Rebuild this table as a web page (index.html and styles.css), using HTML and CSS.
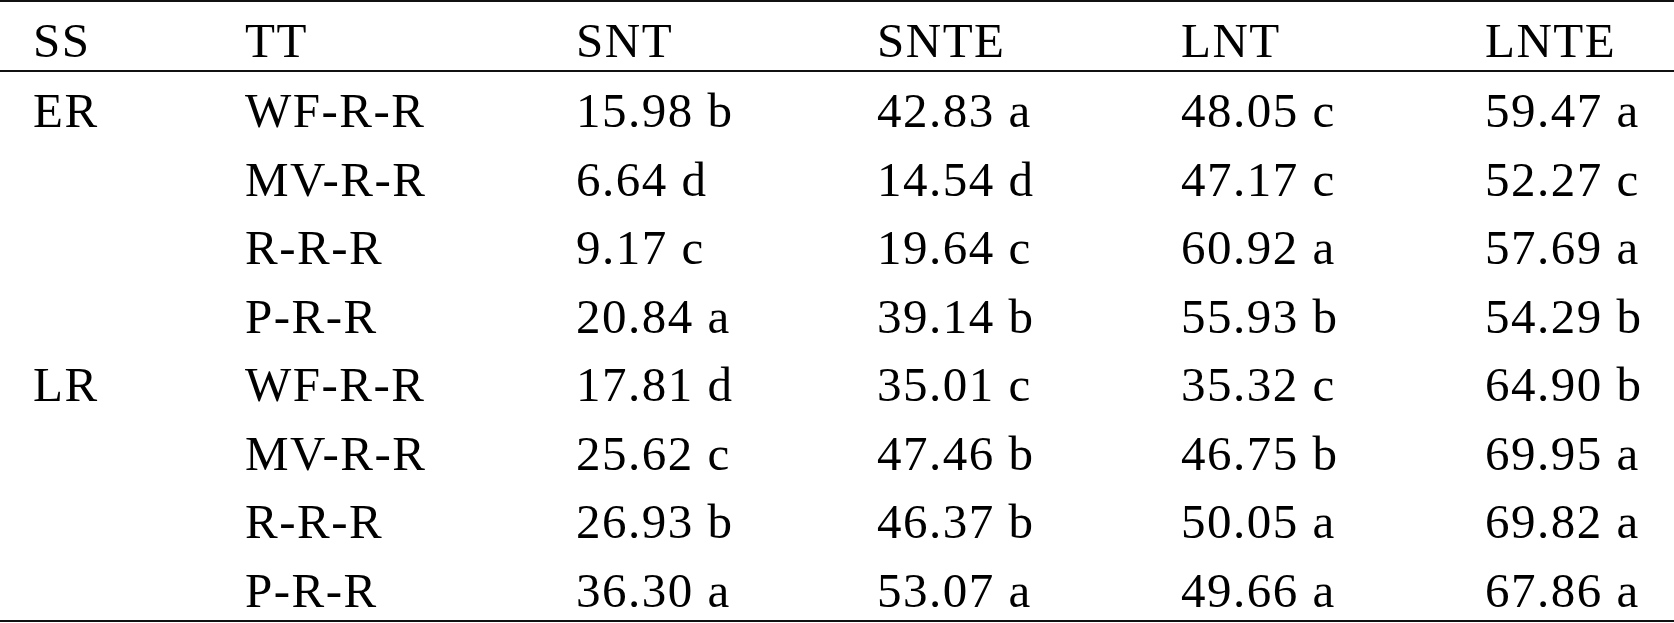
FILE: index.html
```html
<!DOCTYPE html>
<html lang="en">
<head>
  <meta charset="UTF-8">
  <title>Table</title>
  <link rel="stylesheet" href="styles.css">
</head>
<body>
<table class="data-table">
  <colgroup>
    <col class="c-ss">
    <col class="c-tt">
    <col class="c-snt">
    <col class="c-snte">
    <col class="c-lnt">
    <col class="c-lnte">
  </colgroup>
  <thead>
    <tr>
      <th>SS</th>
      <th>TT</th>
      <th>SNT</th>
      <th>SNTE</th>
      <th>LNT</th>
      <th>LNTE</th>
    </tr>
  </thead>
  <tbody>
    <tr><td>ER</td><td>WF-R-R</td><td>15.98 b</td><td>42.83 a</td><td>48.05 c</td><td>59.47 a</td></tr>
    <tr><td></td><td>MV-R-R</td><td>6.64 d</td><td>14.54 d</td><td>47.17 c</td><td>52.27 c</td></tr>
    <tr><td></td><td>R-R-R</td><td>9.17 c</td><td>19.64 c</td><td>60.92 a</td><td>57.69 a</td></tr>
    <tr><td></td><td>P-R-R</td><td>20.84 a</td><td>39.14 b</td><td>55.93 b</td><td>54.29 b</td></tr>
    <tr><td>LR</td><td>WF-R-R</td><td>17.81 d</td><td>35.01 c</td><td>35.32 c</td><td>64.90 b</td></tr>
    <tr><td></td><td>MV-R-R</td><td>25.62 c</td><td>47.46 b</td><td>46.75 b</td><td>69.95 a</td></tr>
    <tr><td></td><td>R-R-R</td><td>26.93 b</td><td>46.37 b</td><td>50.05 a</td><td>69.82 a</td></tr>
    <tr><td></td><td>P-R-R</td><td>36.30 a</td><td>53.07 a</td><td>49.66 a</td><td>67.86 a</td></tr>
  </tbody>
</table>
</body>
</html>
```

FILE: styles.css
```css
* {
  box-sizing: border-box;
}

body {
  margin: 0;
  padding: 0;
  background-color: #fff;
  color: #000;
  font-family: 'Liberation Serif', 'Times New Roman', serif;
}

.data-table {
  width: 1674px;
  table-layout: fixed;
  border-collapse: separate;
  border-spacing: 0;
  border-top: 2px solid #111;
  border-bottom: 2px solid #111;
  font-size: 49px;
  letter-spacing: 1.5px;
}

.c-ss { width: 245px; }
.c-tt { width: 331px; }
.c-snt { width: 301px; }
.c-snte { width: 304px; }
.c-lnt { width: 304px; }
.c-lnte { width: 189px; }

.data-table th,
.data-table td {
  padding: 10px 0 0 0;
  text-align: left;
  font-weight: normal;
  white-space: nowrap;
  vertical-align: top;
}

.data-table th {
  height: 68px;
  line-height: 58px;
  border-bottom: 2px solid #111;
}

.data-table td {
  height: 68.5px;
  line-height: 58.5px;
}

.data-table th:first-child,
.data-table td:first-child {
  padding-left: 33px;
}
```
